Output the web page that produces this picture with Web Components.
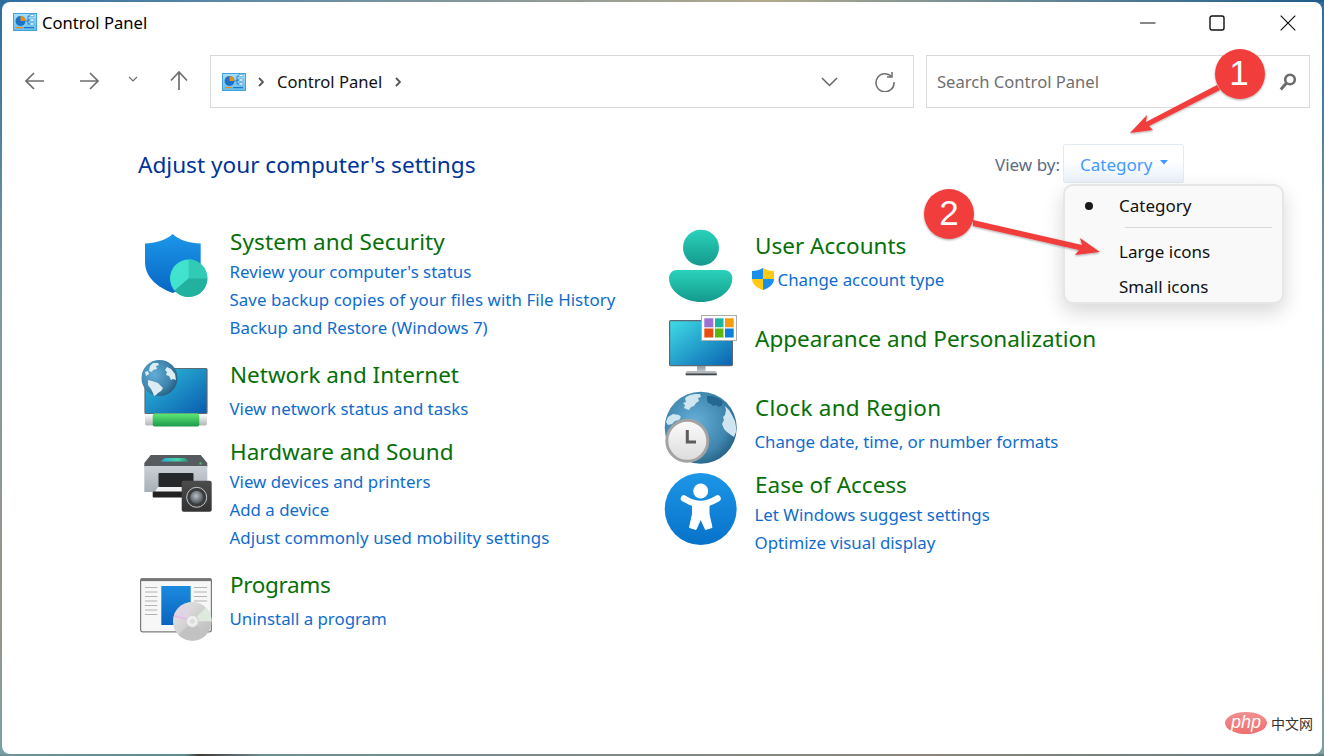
<!DOCTYPE html>
<html lang="en">
<head>
<meta charset="utf-8">
<title>Control Panel</title>
<style>
  html, body { margin: 0; height: 100%; }
  body {
    width: 1324px; height: 756px; box-sizing: border-box; padding: 2px; overflow: hidden;
    font-family: "Noto Sans", "Liberation Sans", sans-serif;
    background:
      linear-gradient(90deg, #2f6c9e 0, #5f8aa6 18%, #8f9a98 40%, #b0a98c 58%, #6d8a96 76%, #1f5d8c 100%) top / 100% 2px no-repeat,
      linear-gradient(90deg, #6f9399 0, #5f8a90 14%, #3f3a36 15%, #6f8f95 20%, #8a8578 70%, #5f7f85 100%) bottom / 100% 2px no-repeat,
      linear-gradient(180deg, #2f6c9e 0, #7f9aa0 40%, #9a9788 82%, #78a0a6 100%);
  }
</style>
</head>
<body>
<cp-window>
  <cp-titlebar slot="top" label="Control Panel"></cp-titlebar>
  <cp-toolbar slot="top"></cp-toolbar>
  <cp-header></cp-header>
  <cp-columns>
    <div slot="left">
      <cp-category heading="System and Security" icon="shield" top="0" gap="0" iy="4" ls="0.1">
        <cp-link>Review your computer's status</cp-link>
        <cp-link style="letter-spacing:.08px">Save backup copies of your files with File History</cp-link>
        <cp-link>Backup and Restore (Windows 7)</cp-link>
      </cp-category>
      <cp-category heading="Network and Internet" icon="network" top="17" gap="4" iy="-1">
        <cp-link>View network status and tasks</cp-link>
      </cp-category>
      <cp-category heading="Hardware and Sound" icon="printer" top="13" gap="0" iy="12">
        <cp-link>View devices and printers</cp-link>
        <cp-link>Add a device</cp-link>
        <cp-link style="letter-spacing:.1px">Adjust commonly used mobility settings</cp-link>
      </cp-category>
      <cp-category heading="Programs" icon="programs" top="17" gap="4" iy="3" ls="-0.35">
        <cp-link>Uninstall a program</cp-link>
      </cp-category>
    </div>
    <div slot="right">
      <cp-category heading="User Accounts" icon="user" top="4" gap="4" iy="0">
        <cp-link uac>Change account type</cp-link>
      </cp-category>
      <cp-category heading="Appearance and Personalization" icon="appearance" top="29" gap="0" iy="-13"></cp-category>
      <cp-category heading="Clock and Region" icon="clock" top="37" gap="4" iy="0" ls="0.25">
        <cp-link style="letter-spacing:-.05px">Change date, time, or number formats</cp-link>
      </cp-category>
      <cp-category heading="Ease of Access" icon="ease" top="13" gap="0" iy="4">
        <cp-link>Let Windows suggest settings</cp-link>
        <cp-link>Optimize visual display</cp-link>
      </cp-category>
    </div>
  </cp-columns>
  <cp-annotations slot="over"></cp-annotations>
  <cp-watermark slot="over"></cp-watermark>
</cp-window>

<script>
const LOGO = `
<svg width="24" height="18" viewBox="0 0 24 18">
  <defs><linearGradient id="lg" x1="0" y1="0" x2="0" y2="1"><stop offset="0" stop-color="#a8e0f8"/><stop offset="1" stop-color="#62bdec"/></linearGradient></defs>
  <rect x=".5" y=".5" width="23" height="17" fill="url(#lg)" stroke="#41a2dc"/>
  <circle cx="7.500" cy="8" r="5" fill="#1a73c8"/>
  <path d="M7.500 8V3a5 5 0 0 1 5 5z" fill="#f08a12"/>
  <path d="M12.500 8h2.500V3h2M15 7h2M15 7v4h2" fill="none" stroke="#1a73c8" stroke-width=".8"/>
  <rect x="17" y="1.500" width="4" height="2" fill="#fff" stroke="#2b86cc" stroke-width=".5"/>
  <rect x="17" y="6" width="4" height="2" fill="#fff" stroke="#2b86cc" stroke-width=".5"/>
  <rect x="17" y="10" width="4" height="2" fill="#fff" stroke="#2b86cc" stroke-width=".5"/>
  <rect x="3" y="14" width="7" height="1.200" fill="#f08a12"/><rect x="11" y="14" width="10" height="1.200" fill="#1a73c8"/>
</svg>`;

const ICONS = {
  shield: `
  <defs><linearGradient id="a" x1="0" y1="0" x2="0" y2="1"><stop offset="0" stop-color="#1c96ea"/><stop offset="1" stop-color="#0867c4"/></linearGradient></defs>
  <path d="M32.700 4C26 10 15 13.500 5 13.500V32C5 46 16 57 32.700 63 49 57 60.700 46 60.700 32V13.500C50 13.500 39 10 32.700 4Z" fill="url(#a)"/>
  <circle cx="48.700" cy="48.300" r="18.700" fill="#41e3cf"/>
  <path d="M48.700 48.300V29.600A18.700 18.700 0 0 1 67.400 48.300Z" fill="#31cbb5"/>
  <path d="M48.700 48.300H67.400A18.700 18.700 0 0 1 34.500 60.500Z" fill="#22b19e"/>`,
  network: `
  <defs>
    <linearGradient id="a" x1="0" y1="0" x2="1" y2="1"><stop offset="0" stop-color="#2fc0dc"/><stop offset="1" stop-color="#0a5cae"/></linearGradient>
    <linearGradient id="b" x1="0" y1="0" x2="0" y2="1"><stop offset="0" stop-color="#fafafa"/><stop offset="1" stop-color="#b4b8b8"/></linearGradient>
    <linearGradient id="c" x1="0" y1="0" x2="0" y2="1"><stop offset="0" stop-color="#5fe878"/><stop offset="1" stop-color="#1c9a4a"/></linearGradient>
    <radialGradient id="g" cx=".36" cy=".4" r=".68"><stop offset="0" stop-color="#62acd6"/><stop offset=".65" stop-color="#3f85ad"/><stop offset="1" stop-color="#235f80"/></radialGradient>
  </defs>
  <rect x="5" y="10.500" width="62" height="45" rx="1" fill="url(#a)" stroke="#5d6a74" stroke-width="1.200"/>
  <rect x="5" y="56.500" width="62" height="11" rx="2" fill="url(#b)"/>
  <rect x="12.700" y="55.500" width="46.600" height="13" rx="2" fill="url(#c)"/>
  <circle cx="19.500" cy="20" r="18" fill="url(#g)"/>
  <path d="M10 8l3-3 5 0 1 2-3 1 1 3-4 1-1 2-3-1zM27 9l4 2 4 5 1 6-3-1-2 1-2-4-3-1 1-3-2-2zM8 22l4 1 6 2 5 5-2 3-3 2-2 2-2 1-1-3-2-4-3-4zM5 14l3-1 1 3-3 2z" fill="#dcecf2"/>`,
  printer: `
  <defs>
    <linearGradient id="a" x1="0" y1="0" x2="0" y2="1"><stop offset="0" stop-color="#c9d0d6"/><stop offset="1" stop-color="#a8b0b7"/></linearGradient>
    <linearGradient id="t" x1="0" y1="0" x2="1" y2="0"><stop offset="0" stop-color="#2fa7d8"/><stop offset=".6" stop-color="#46d8a8"/><stop offset="1" stop-color="#2a8a80"/></linearGradient>
    <linearGradient id="s" x1="0" y1="0" x2="0" y2="1"><stop offset="0" stop-color="#4c4c4c"/><stop offset="1" stop-color="#333"/></linearGradient>
    <radialGradient id="c" cx=".45" cy=".4" r=".6"><stop offset="0" stop-color="#b8c0c6"/><stop offset="1" stop-color="#4c5054"/></radialGradient>
  </defs>
  <path d="M10.700 7H60.700L67.300 15V19H4.300V15Z" fill="#565b60"/>
  <path d="M25 10H45L49 13.500H20.700Z" fill="url(#t)"/>
  <rect x="59.500" y="14.500" width="2" height="2" fill="#3fdc5c"/>
  <path d="M4.300 18H67.300V44H4.300Z" fill="url(#a)"/>
  <rect x="18.500" y="25" width="35" height="14" rx="1" fill="#26282a"/>
  <path d="M13 47L18 39H45V47Z" fill="#f1f1f1"/>
  <rect x="12.700" y="43.500" width="34" height="6" rx="1" fill="#222"/>
  <rect x="41.700" y="32.700" width="30" height="31" rx="2" fill="url(#s)"/>
  <circle cx="56.700" cy="49.300" r="10" fill="#3a3c3e" stroke="#c6cacc" stroke-width="1"/>
  <circle cx="56.700" cy="49.300" r="6.500" fill="url(#c)"/>`,
  programs: `
  <defs>
    <linearGradient id="a" x1="0" y1="0" x2="0" y2="1"><stop offset="0" stop-color="#1a8adf"/><stop offset="1" stop-color="#0b64bf"/></linearGradient>
    <linearGradient id="d" x1="0" y1="0" x2="1" y2="1"><stop offset="0" stop-color="#e8e8e8"/><stop offset="1" stop-color="#b8b8b8"/></linearGradient>
  </defs>
  <rect x=".6" y="6.800" width="70.800" height="53" rx="2" fill="#f7f7f7" stroke="#7c7c7c" stroke-width="1.200"/>
  <rect x=".6" y="6.300" width="70.800" height="2.800" fill="#767676"/>
  <path d="M5 15.500H17.300M5 20H17.300M5 24.500H17.300M5 29H17.300M5 33.500H17.300M5 38H17.300M5 42.500H17.300M54 15.500H67M54 20H67M54 24.500H67M54 29H67" stroke="#b2b2b2" stroke-width="1"/>
  <rect x="21.300" y="14" width="29.400" height="39" fill="url(#a)"/>
  <circle cx="52.300" cy="49.300" r="19.300" fill="url(#d)"/>
  <path d="M52.300 49.300L33.500 45A19.300 19.300 0 0 1 45 31.500Z" fill="#ddd5e2"/>
  <path d="M52.300 49.300L66 35.500A19.300 19.300 0 0 1 71.600 49.300Z" fill="#dfeadf"/>
  <path d="M52.300 49.300L66 63A19.300 19.300 0 0 1 38.500 63Z" fill="#c2c2c2"/>
  <path d="M34 44L46 47" stroke="#eeb8e6" stroke-width="1.500"/>
  <circle cx="52.300" cy="49.300" r="6" fill="#efefef" stroke="#d0d0d0"/>
  <circle cx="52.300" cy="49.300" r="2.500" fill="#dcdcdc"/>`,
  user: `
  <defs>
    <linearGradient id="a" x1="0" y1="0" x2="0" y2="1"><stop offset="0" stop-color="#2ad2bb"/><stop offset="1" stop-color="#149a8c"/></linearGradient>
  </defs>
  <circle cx="36" cy="17.700" r="18" fill="url(#a)"/>
  <path d="M12 40H59C63.500 40 67.300 43.500 67.300 48 67.300 62 52 72 36 72 20 72 4 62 4 48 4 43.500 7.500 40 12 40Z" fill="url(#a)"/>`,
  appearance: `
  <defs>
    <linearGradient id="a" x1="0" y1="0" x2="1" y2="1"><stop offset="0" stop-color="#3fdde6"/><stop offset="1" stop-color="#0a62b2"/></linearGradient>
    <linearGradient id="s" x1="0" y1="0" x2="0" y2="1"><stop offset="0" stop-color="#8f979c"/><stop offset="1" stop-color="#c0c6ca"/></linearGradient>
  </defs>
  <rect x="4.600" y="10.600" width="62.800" height="45" rx="1" fill="url(#a)" stroke="#5d6a74" stroke-width="1.200"/>
  <rect x="32" y="56" width="8.500" height="5" fill="url(#s)"/>
  <path d="M20.700 65V63C20.700 61.500 22 61 23 61H49.500C50.500 61 51.700 61.500 51.700 63V65Z" fill="#b4babd"/>
  <rect x="20.700" y="63.500" width="31" height="1.800" fill="#3e4448"/>
  <rect x="36.500" y="5.500" width="35" height="25" fill="#fff" stroke="#adadad"/>
  <rect x="39.300" y="8.300" width="9" height="9" fill="#9b6fd6"/><rect x="50" y="8.300" width="8.500" height="9" fill="#1cb5a3"/><rect x="60" y="8.300" width="8.700" height="9" fill="#f59b0c"/>
  <rect x="39.300" y="18.500" width="9" height="9" fill="#e84d10"/><rect x="50" y="18.500" width="8.500" height="9" fill="#5cb80e"/><rect x="60" y="18.500" width="8.700" height="9" fill="#0a7fdc"/>`,
  clock: `
  <defs>
    <radialGradient id="g" cx=".42" cy=".42" r=".64"><stop offset="0" stop-color="#66afd8"/><stop offset=".7" stop-color="#3f85ad"/><stop offset="1" stop-color="#235f82"/></radialGradient>
    <linearGradient id="c" x1="0" y1="0" x2="0" y2="1"><stop offset="0" stop-color="#fbfbfb"/><stop offset="1" stop-color="#dcdcdc"/></linearGradient>
  </defs>
  <circle cx="35.700" cy="35.700" r="36" fill="url(#g)"/>
  <path d="M21 5l4-2 5-1 5 0 1 3-3 1 1 3-3 2-2 3-3 1-2 3-3-1-2-1 1-3-2-2 3-1-1-3zM3 25l5-3 6 1 2 2-2 3-4 1-3 3-4 1-2-3zM60 14l4 4 3 5 3 6 1 6 0 5-2 5-3-2-4-3-3-3-2-5 2-4-1-3 2-2 1-5z" fill="#cfe6f0"/>
  <path d="M42 4l5 0 6 2 5 4-1 3-3 2-3-2-3 1-2-2-3-1-1-3z" fill="#24688f"/>
  <circle cx="22.300" cy="48.700" r="20.500" fill="url(#c)" stroke="#a3a3a3" stroke-width="3"/>
  <path d="M22.300 38V50H31" fill="none" stroke="#5c5c5c" stroke-width="3"/>`,
  ease: `
  <defs><linearGradient id="a" x1="0" y1="0" x2="0" y2="1"><stop offset="0" stop-color="#1d96e8"/><stop offset="1" stop-color="#0672c9"/></linearGradient></defs>
  <circle cx="35.700" cy="36" r="36" fill="url(#a)"/>
  <circle cx="35.700" cy="18" r="7.500" fill="#fff"/>
  <path d="M19 25.500C27 30 30 31 35.700 31 41 31 45 30 52.500 25.500" fill="none" stroke="#fff" stroke-width="6.500" stroke-linecap="round"/>
  <path d="M27.500 29H44V41L47 54.500 40.500 56.500 35.700 46 31 56.500 24.500 54.500 27.500 41Z" fill="#fff" stroke="#fff" stroke-width="1" stroke-linejoin="round"/>`
};

class CpIcon extends HTMLElement {
  constructor() {
    super();
    this.attachShadow({mode: 'open'});
  }
  connectedCallback() {
    this.shadowRoot.innerHTML = `<style>:host{display:block;width:72px;height:72px}svg{display:block;overflow:visible}</style>
    <svg width="72" height="72" viewBox="0 0 72 72">${ICONS[this.getAttribute('name')]}</svg>`;
  }
}
customElements.define('cp-icon', CpIcon);

class CpWindow extends HTMLElement {
  constructor() {
    super();
    this.attachShadow({mode: 'open'});
    this.shadowRoot.innerHTML = `<style>
      :host { display:block; position:relative; width:1320px; height:752px; background:#fff; border-radius:8px; overflow:hidden; color:#000; }
    </style><slot name="top"></slot><slot></slot><slot name="over"></slot>`;
  }
}
customElements.define('cp-window', CpWindow);

class CpTitlebar extends HTMLElement {
  constructor() {
    super();
    this.attachShadow({mode: 'open'});
  }
  connectedCallback() {
    this.shadowRoot.innerHTML = `<style>
      :host { display:flex; align-items:center; height:42px; padding-left:11px; }
      .logo { display:flex; margin-right:5px; margin-top:-2px; }
      .label { font-size:16.600px; line-height:42px; flex:1; }
      .btn { display:flex; justify-content:center; align-items:center; height:42px; }
      svg { display:block; }
    </style>
    <span class="logo">${LOGO}</span>
    <span class="label">${this.getAttribute('label')}</span>
    <span class="btn" style="width:65px"><svg width="16" height="16"><path d="M0 8H15.500" stroke="#111" stroke-width="1.200"/></svg></span>
    <span class="btn" style="width:73px"><svg width="16" height="16"><rect x="1" y="1" width="14" height="14" rx="2" fill="none" stroke="#111" stroke-width="1.400"/></svg></span>
    <span class="btn" style="width:69px"><svg width="16" height="16"><path d="M.7 .7L15.300 15.300M15.300 .7L.7 15.300" stroke="#111" stroke-width="1.200"/></svg></span>`;
  }
}
customElements.define('cp-titlebar', CpTitlebar);

class CpToolbar extends HTMLElement {
  constructor() {
    super();
    this.attachShadow({mode: 'open'});
  }
  connectedCallback() {
    this.shadowRoot.innerHTML = `<style>
      :host { display:flex; align-items:stretch; gap:12px; height:52px; padding:11px 12px 0 0; }
      nav { display:flex; align-items:center; width:196px; flex:none; }
      nav svg { display:block; }
      .box { box-sizing:border-box; border:1px solid #d9d9d9; display:flex; align-items:center; height:53px; }
      .addr { width:704px; padding-left:11px; flex:none; }
      .search { flex:1; padding:0 12px 0 10px; color:#6f6f6f; }
      .crumb { font-size:16.600px; color:#111; }
      .grow { flex:1; }
    </style>
    <nav>
      <svg style="margin-left:23px" width="20" height="20"><path d="M1 10H19M9 2L1 10L9 18" fill="none" stroke="#6e6e6e" stroke-width="1.700"/></svg>
      <svg style="margin-left:34px" width="20" height="20"><path d="M1 10H19M11 2L19 10L11 18" fill="none" stroke="#6e6e6e" stroke-width="1.700"/></svg>
      <svg style="margin-left:29px;margin-top:-4px" width="10" height="8"><path d="M1 2L5 6L9 2" fill="none" stroke="#6e6e6e" stroke-width="1.200"/></svg>
      <svg style="margin-left:31px" width="20" height="20"><path d="M10 19V1M2 9.500L10 1L18 9.500" fill="none" stroke="#6e6e6e" stroke-width="1.700"/></svg>
    </nav>
    <div class="box addr">
      <span style="display:flex">${LOGO}</span>
      <svg style="margin:0 13px 0 12px" width="6" height="10"><path d="M1 1L5 5L1 9" fill="none" stroke="#555" stroke-width="1.800"/></svg>
      <span class="crumb">Control Panel</span>
      <svg style="margin-left:13px" width="6" height="10"><path d="M1 1L5 5L1 9" fill="none" stroke="#555" stroke-width="1.800"/></svg>
      <span class="grow"></span>
      <svg style="margin-right:37px" width="17" height="10"><path d="M1 1L8.500 8.500L16 1" fill="none" stroke="#666" stroke-width="1.500"/></svg>
      <svg style="margin-right:18px" width="20" height="20" viewBox="0 0 20 20"><path d="M16.500 4.500A9 9 0 1 0 19 10" fill="none" stroke="#6e6e6e" stroke-width="1.500"/><path d="M17 0V5H12" fill="none" stroke="#6e6e6e" stroke-width="1.500"/></svg>
    </div>
    <div class="box search">
      <span style="font-size:16.600px">Search Control Panel</span>
      <span class="grow"></span>
      <svg width="18" height="20" viewBox="0 0 18 20"><circle cx="11" cy="7.500" r="4.800" fill="none" stroke="#6b6b6b" stroke-width="2.600"/><path d="M7.500 11L1.800 17.500" stroke="#6b6b6b" stroke-width="3"/></svg>
    </div>`;
  }
}
customElements.define('cp-toolbar', CpToolbar);

class CpHeader extends HTMLElement {
  constructor() {
    super();
    this.attachShadow({mode: 'open'});
    this.shadowRoot.innerHTML = `<style>
      :host { display:flex; align-items:center; height:39px; margin:37px 0 0 136px; position:relative; }
      h1 { margin:2px 0 0; font-weight:400; font-size:22.600px; color:#003399; flex:1; }
      .view { font-size:17px; color:#5b6b84; margin-right:3px; padding-top:1px; }
      .combo { box-sizing:border-box; width:121px; height:39px; margin-right:138px; display:flex; align-items:center; padding:1px 0 0 16px; font-size:17px; color:#3f9bff;
        border:1px solid #e1ebf6; border-radius:2px; background:linear-gradient(#fff 40%, #e9f1fa); }
      .combo svg { margin-left:8px; margin-top:-4px; }
      .menu { position:absolute; left:925px; top:40px; box-sizing:border-box; width:221px; height:120px; background:#f9f9f9; border:2px solid #e6e6e6; border-radius:10px;
        box-shadow:0 8px 20px rgba(0,0,0,.16); font-size:17px; color:#111; z-index:2; }
      .item { position:relative; display:flex; align-items:center; padding-left:54px; }
      .item.first { height:39px; }
      .item.second { height:35px; margin-top:9px; }
      .item.third { height:35px; }
      .dot { position:absolute; left:20px; top:16px; width:8px; height:8px; border-radius:50%; background:#1a1a1a; }
      hr { position:absolute; left:60px; right:10px; top:41px; margin:0; border:0; border-top:1px solid #d8d8d8; }
    </style>
    <h1>Adjust your computer's settings</h1>
    <span class="view">View by:</span>
    <span class="combo">Category<svg width="8" height="5"><path d="M0 0H8L4 4.500Z" fill="#3f9bff"/></svg></span>
    <div class="menu">
      <div class="item first"><span class="dot"></span>Category</div>
      <hr>
      <div class="item second">Large icons</div>
      <div class="item third">Small icons</div>
    </div>`;
  }
}
customElements.define('cp-header', CpHeader);

class CpColumns extends HTMLElement {
  constructor() {
    super();
    this.attachShadow({mode: 'open'});
    this.shadowRoot.innerHTML = `<style>
      :host { display:grid; grid-template-columns:525px 1fr; margin:42px 0 0 138px; }
    </style><slot name="left"></slot><slot name="right"></slot>`;
  }
}
customElements.define('cp-columns', CpColumns);

class CpCategory extends HTMLElement {
  constructor() {
    super();
    this.attachShadow({mode: 'open'});
  }
  connectedCallback() {
    const top = this.getAttribute('top') || 0;
    const gap = this.getAttribute('gap') || 0;
    const iy = Number(this.getAttribute('iy') || 0) + 1;
    const ls = this.getAttribute('ls') || 0;
    this.shadowRoot.innerHTML = `<style>
      :host { display:flex; margin-top:${top}px; }
      .icon { width:90px; height:0; flex:none; }
      cp-icon { margin-top:${iy}px; }
      h2 { margin:0; padding-top:2px; font-weight:400; font-size:22.500px; line-height:30px; letter-spacing:${ls}px; color:#066f06; }
      .links { display:flex; flex-direction:column; margin-top:${gap}px; }
    </style>
    <div class="icon"><cp-icon name="${this.getAttribute('icon')}"></cp-icon></div>
    <div><h2>${this.getAttribute('heading')}</h2><div class="links"><slot></slot></div></div>`;
  }
}
customElements.define('cp-category', CpCategory);

class CpLink extends HTMLElement {
  constructor() {
    super();
    this.attachShadow({mode: 'open'});
  }
  connectedCallback() {
    const uac = this.hasAttribute('uac') ? `<svg style="margin:0 4px 0 -3px" width="22" height="22" viewBox="0 0 22 22">
      <path d="M11 0C8 2 4 3 0 3V11H11Z" fill="#1a8fe8"/>
      <path d="M11 0C14 2 18 3 22 3V11H11Z" fill="#ffc914"/>
      <path d="M0 11H11V22C5 20 0 16 0 11Z" fill="#ffc914"/>
      <path d="M11 11H22C22 16 17 20 11 22Z" fill="#1a8fe8"/></svg>` : '';
    this.shadowRoot.innerHTML = `<style>
      :host { display:flex; align-items:center; height:28px; font-size:16.850px; color:#0f6cce; white-space:nowrap; margin-left:-.5px; }
    </style>${uac}<slot></slot>`;
  }
}
customElements.define('cp-link', CpLink);

class CpAnnotations extends HTMLElement {
  constructor() {
    super();
    this.attachShadow({mode: 'open'});
    this.shadowRoot.innerHTML = `<style>
      :host { position:absolute; inset:0; pointer-events:none; z-index:5; }
      svg { position:absolute; left:-2px; top:-2px; }
      text { font-family:"Liberation Sans", sans-serif; font-size:35px; fill:#fff; text-anchor:middle; }
    </style>
    <svg width="1324" height="756" viewBox="0 0 1324 756">
      <defs><filter id="sh" x="-20%" y="-20%" width="140%" height="140%"><feDropShadow dx="0" dy="1" stdDeviation="1.200" flood-color="#000" flood-opacity=".35"/></filter></defs>
      <g filter="url(#sh)" fill="#f23c3c">
        <path d="M1130 133L1147 115L1146 122L1217 85L1220 90L1149 126L1153 130Z"/>
        <circle cx="1240" cy="74" r="25"/>
        <path d="M973 220L1082 245L1080 238L1100 252L1075 255L1079 250L973 226Z"/>
        <circle cx="949" cy="214" r="25"/>
      </g>
      <text x="1239" y="85">1</text>
      <text x="949" y="225">2</text>
    </svg>`;
  }
}
customElements.define('cp-annotations', CpAnnotations);

class CpWatermark extends HTMLElement {
  constructor() {
    super();
    this.attachShadow({mode: 'open'});
    this.shadowRoot.innerHTML = `<style>
      :host { position:absolute; right:9px; bottom:20px; display:flex; align-items:center; gap:4px; }
      .php { width:42px; height:22px; border-radius:50%; background:linear-gradient(#f28f8f,#f06e6e); color:#fff; font:italic 18px/20px "Liberation Sans", sans-serif; text-align:center; }
      .cn { font:14px/22px "Noto Sans CJK SC", sans-serif; color:#333; }
    </style><span class="php">php</span><span class="cn">中文网</span>`;
  }
}
customElements.define('cp-watermark', CpWatermark);
</script>
</body>
</html>
